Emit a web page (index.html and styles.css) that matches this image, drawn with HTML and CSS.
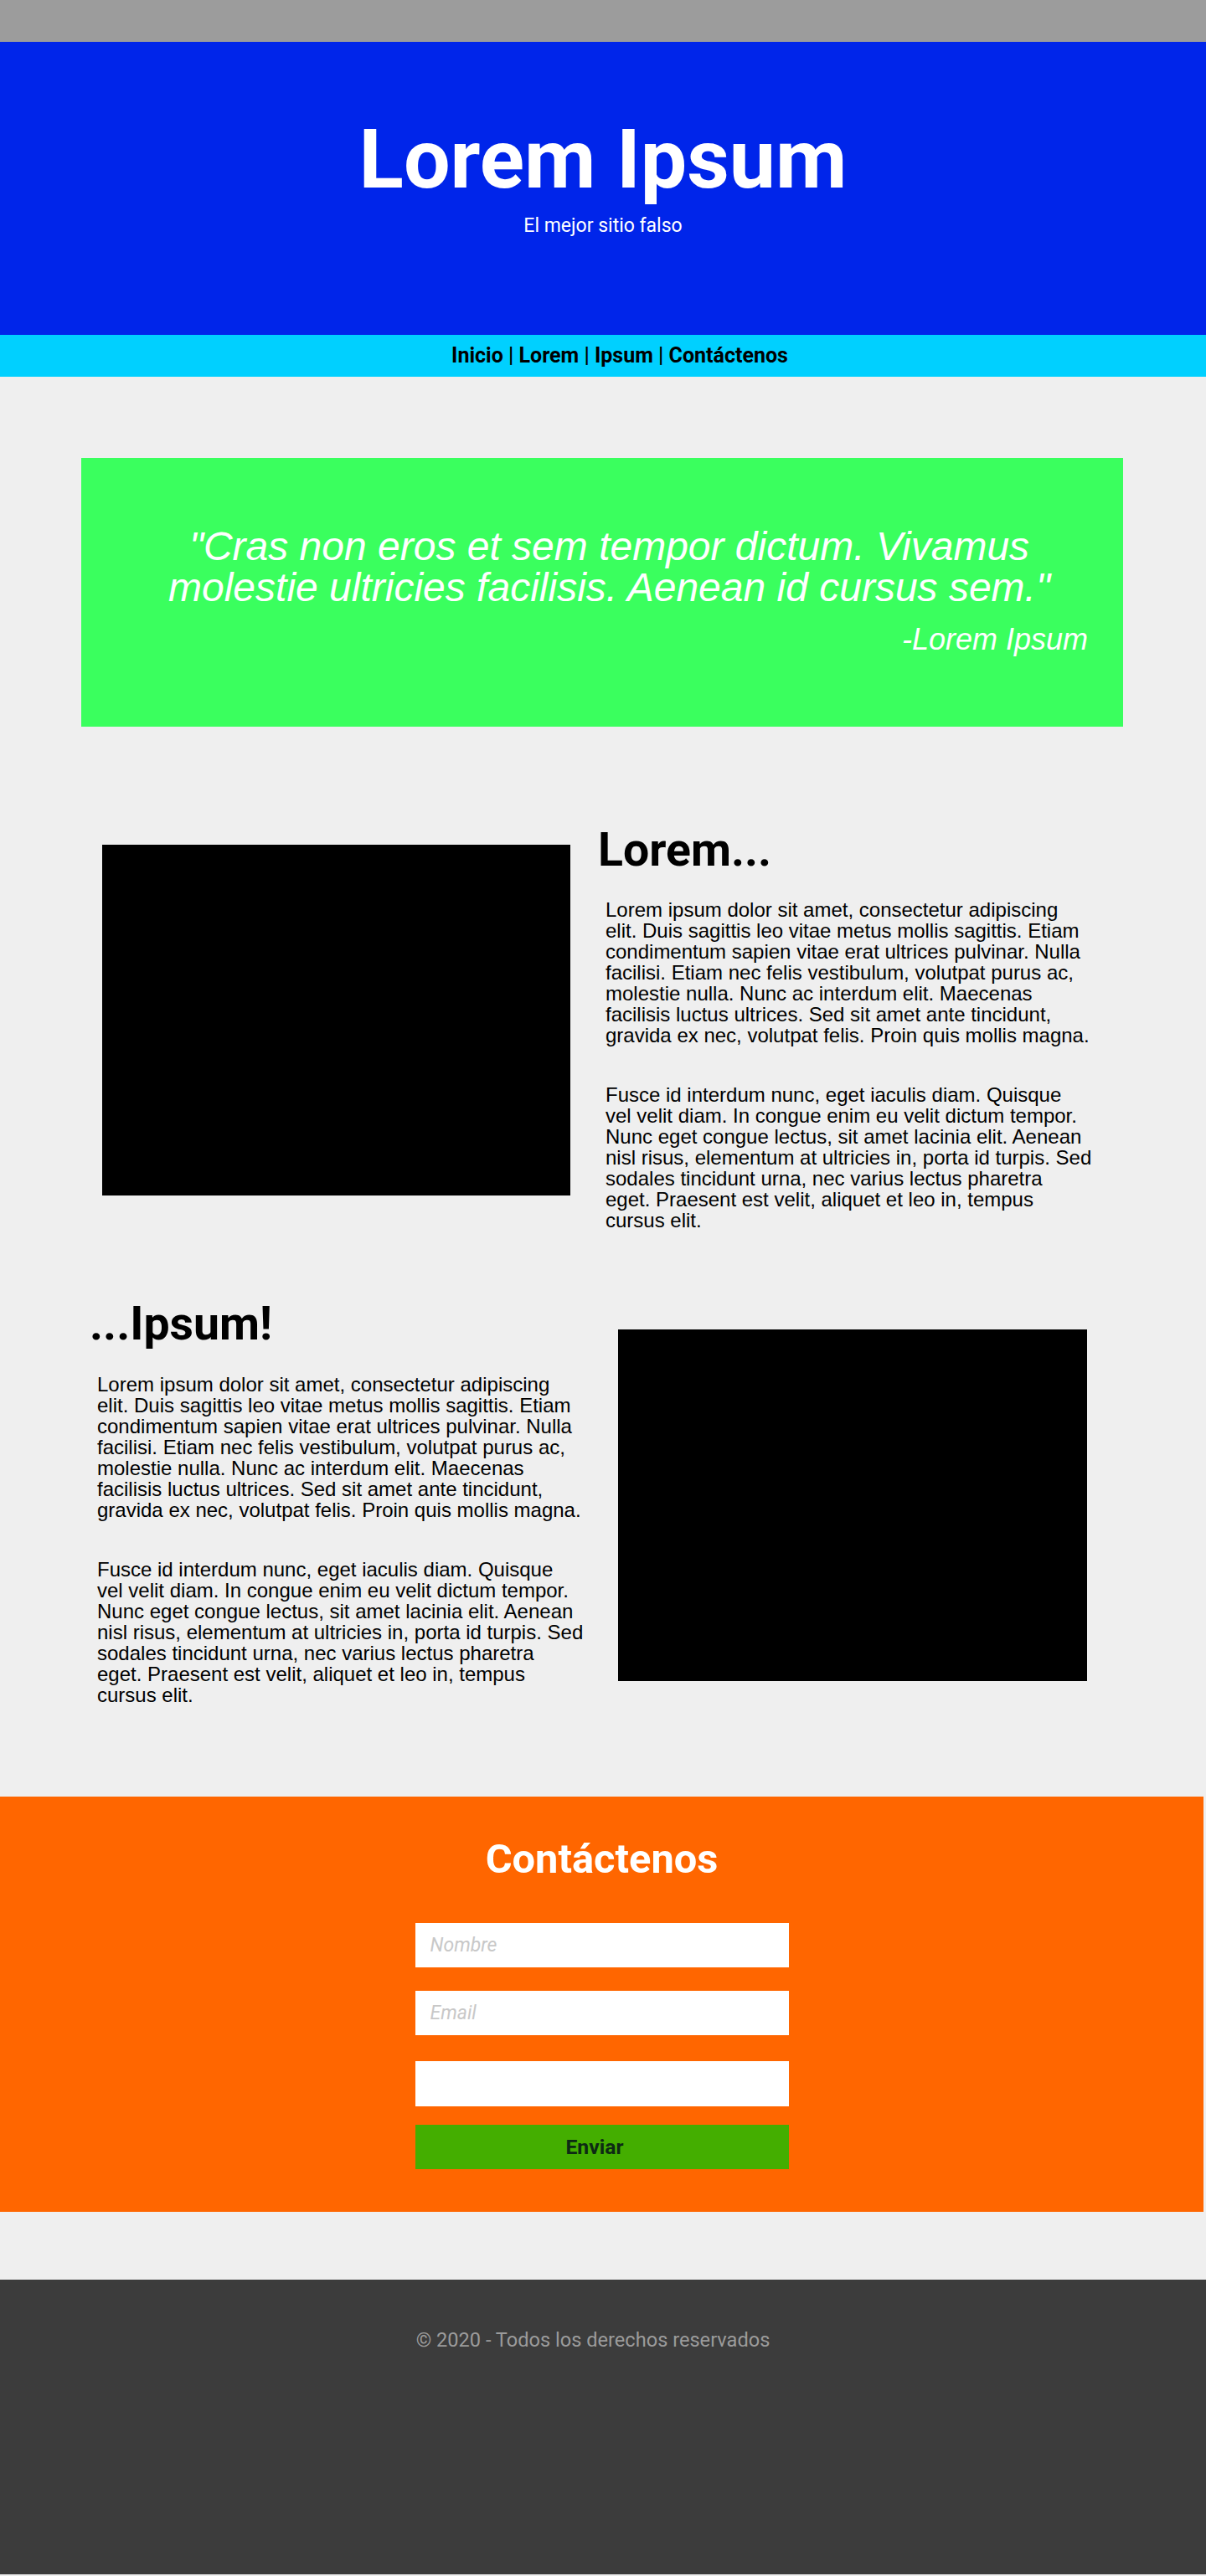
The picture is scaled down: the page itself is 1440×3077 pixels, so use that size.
FILE: index.html
```html
<!DOCTYPE html>
<html lang="es">
<head>
<meta charset="utf-8">
<title>Lorem Ipsum</title>
<link rel="stylesheet" href="styles.css">
</head>
<body>
<div class="topbar"></div>
<header class="hero">
  <h1 class="hero-title">Lorem Ipsum</h1>
  <p class="hero-sub">El mejor sitio falso</p>
</header>
<nav class="nav">
  <a href="#">Inicio</a> | <a href="#">Lorem</a> | <a href="#">Ipsum</a> | <a href="#">Contáctenos</a>
</nav>
<main class="content">
  <section class="quote-box">
    <blockquote class="quote">"Cras non eros et sem tempor dictum. Vivamus molestie ultricies facilisis. Aenean id cursus sem."</blockquote>
    <p class="attrib">-Lorem Ipsum</p>
  </section>

  <section class="row row-one">
    <div class="pic pic-one"></div>
    <div class="text-col">
      <h2 class="row-title">Lorem...</h2>
      <p class="body-text">Lorem ipsum dolor sit amet, consectetur adipiscing elit. Duis sagittis leo vitae metus mollis sagittis. Etiam condimentum sapien vitae erat ultrices pulvinar. Nulla facilisi. Etiam nec felis vestibulum, volutpat purus ac, molestie nulla. Nunc ac interdum elit. Maecenas facilisis luctus ultrices. Sed sit amet ante tincidunt, gravida ex nec, volutpat felis. Proin quis mollis magna.</p>
      <p class="body-text body-second">Fusce id interdum nunc, eget iaculis diam. Quisque vel velit diam. In congue enim eu velit dictum tempor. Nunc eget congue lectus, sit amet lacinia elit. Aenean nisl risus, elementum at ultricies in, porta id turpis. Sed sodales tincidunt urna, nec varius lectus pharetra eget. Praesent est velit, aliquet et leo in, tempus cursus elit.</p>
    </div>
  </section>

  <section class="row row-two">
    <div class="text-col">
      <h2 class="row-title">...Ipsum!</h2>
      <p class="body-text">Lorem ipsum dolor sit amet, consectetur adipiscing elit. Duis sagittis leo vitae metus mollis sagittis. Etiam condimentum sapien vitae erat ultrices pulvinar. Nulla facilisi. Etiam nec felis vestibulum, volutpat purus ac, molestie nulla. Nunc ac interdum elit. Maecenas facilisis luctus ultrices. Sed sit amet ante tincidunt, gravida ex nec, volutpat felis. Proin quis mollis magna.</p>
      <p class="body-text body-second">Fusce id interdum nunc, eget iaculis diam. Quisque vel velit diam. In congue enim eu velit dictum tempor. Nunc eget congue lectus, sit amet lacinia elit. Aenean nisl risus, elementum at ultricies in, porta id turpis. Sed sodales tincidunt urna, nec varius lectus pharetra eget. Praesent est velit, aliquet et leo in, tempus cursus elit.</p>
    </div>
    <div class="pic pic-two"></div>
  </section>

  <section class="contact">
    <h2 class="contact-title">Contáctenos</h2>
    <form class="contact-form">
      <input class="field field-name" type="text" placeholder="Nombre">
      <input class="field field-email" type="email" placeholder="Email">
      <textarea class="field field-msg"></textarea>
      <button class="send" type="button">Enviar</button>
    </form>
  </section>
</main>
<footer class="footer">
  <p class="footer-text">© 2020 - Todos los derechos reservados</p>
</footer>
</body>
</html>
```
FILE: styles.css
```css
html {
  background: #efefef;
}
body {
  margin: 0;
  font-family: Roboto, "Noto Sans", sans-serif;
  color: #000;
}

.topbar {
  height: 50px;
  background: #9c9c9c;
}

.hero {
  height: 350px;
  box-sizing: border-box;
  padding-top: 92px;
  background: #0025ea;
  color: #fff;
  text-align: center;
}
.hero-title {
  margin: 0;
  font-size: 98.6px;
  line-height: 1;
  font-weight: 700;
}
.hero-sub {
  margin: 17px 0 0;
  font-size: 23px;
  line-height: 1;
}

.nav {
  height: 50px;
  line-height: 50px;
  background: #00d0ff;
  text-align: center;
  font-size: 25px;
  font-weight: 700;
  padding-left: 40px;
}
.nav a {
  color: #000;
  text-decoration: none;
}

.content {
  padding-top: 97px;
}

.quote-box {
  width: 1244px;
  height: 321px;
  box-sizing: border-box;
  margin-left: 97px;
  padding: 81px 42px 0 59px;
  background: #3aff5e;
  color: #fff;
  font-family: "Liberation Sans", Arial, sans-serif;
  font-style: italic;
}
.quote {
  margin: 0;
  font-size: 48px;
  line-height: 49px;
  text-align: center;
}
.attrib {
  margin: 20px 0 0;
  font-size: 36px;
  line-height: 36px;
  text-align: right;
}

.row {
  display: flex;
  align-items: flex-start;
}
.row-one {
  margin-top: 120px;
  padding-left: 122px;
  gap: 33px;
}
.row-two {
  margin-top: 84px;
  padding-left: 107px;
  gap: 41px;
}
.pic {
  width: 559px;
  height: 419px;
  flex: none;
  background: #000;
}
.pic-one {
  margin-top: 21px;
}
.pic-two {
  width: 560px;
  height: 420px;
  margin-top: 34px;
}
.text-col {
  width: 590px;
  flex: none;
}
.row-title {
  margin: 0;
  font-size: 55.4px;
  line-height: 1;
  font-weight: 700;
}
.body-text {
  width: 581px;
  margin: 31px 0 0 9px;
  font-family: "Liberation Sans", Arial, sans-serif;
  font-size: 24px;
  line-height: 25px;
}
.body-second {
  margin-top: 46px;
}

.contact {
  margin-top: 109px;
  margin-right: 3px;
  height: 496px;
  box-sizing: border-box;
  padding-top: 51px;
  background: #ff6600;
  text-align: center;
}
.contact-title {
  margin: 0;
  color: #fff;
  font-size: 48.8px;
  line-height: 1;
  font-weight: 700;
}
.contact-form {
  display: flex;
  flex-direction: column;
  align-items: center;
  margin-top: 51px;
}
.field {
  display: block;
  width: 446px;
  height: 53px;
  box-sizing: border-box;
  border: 0;
  margin: 0;
  padding: 0 18px;
  background: #fff;
  font-family: Roboto, sans-serif;
  font-size: 23px;
  outline: none;
}
.field::placeholder {
  color: #c8c8c8;
  font-style: italic;
}
.field-email {
  margin-top: 28px;
}
.field-msg {
  margin-top: 31px;
  height: 54px;
  resize: none;
}
.send {
  display: block;
  width: 446px;
  height: 53px;
  margin-top: 22px;
  border: 0;
  padding: 0 17px 0 0;
  background: #44ae00;
  color: #0d2a14;
  font-family: Roboto, sans-serif;
  font-size: 24.7px;
  font-weight: 700;
  cursor: pointer;
}

.footer {
  margin-top: 81px;
  height: 352px;
  box-sizing: border-box;
  padding: 61px 24px 0 0;
  background: #3c3c3c;
  text-align: center;
}
.footer-text {
  margin: 0;
  color: #9b9b9b;
  font-size: 23.6px;
  line-height: 1;
}
```
